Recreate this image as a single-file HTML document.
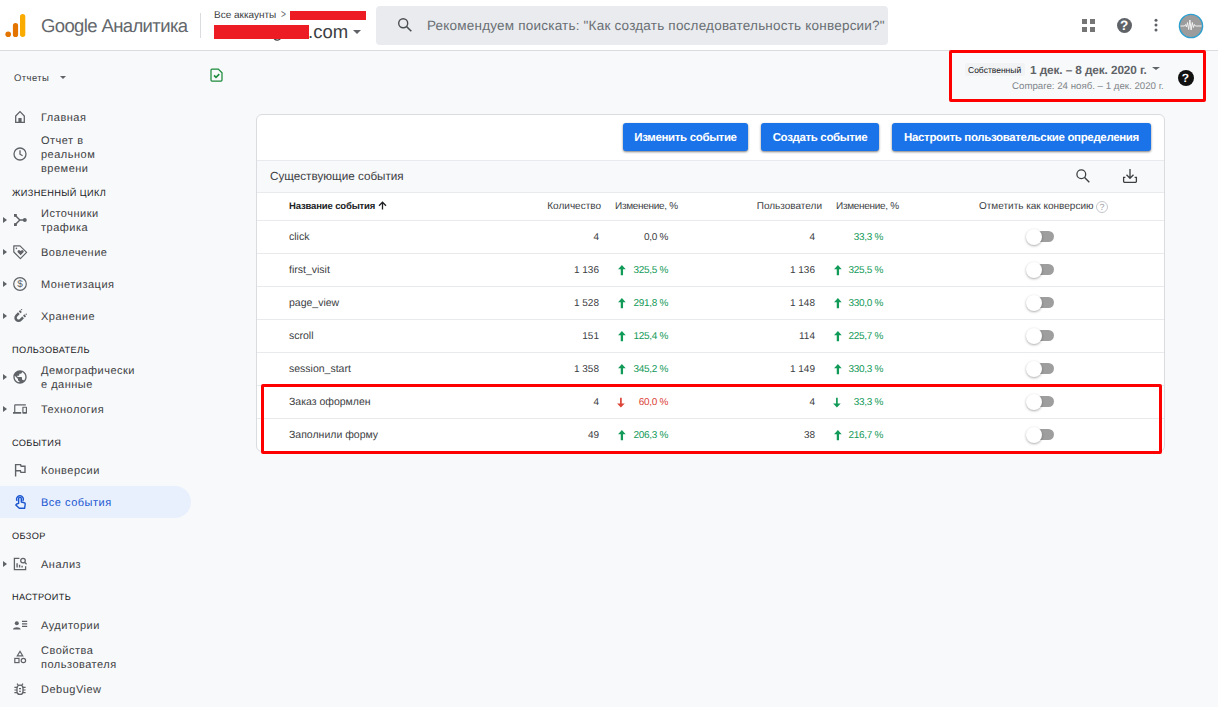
<!DOCTYPE html>
<html lang="ru">
<head>
<meta charset="utf-8">
<title>Google Аналитика</title>
<style>
*{box-sizing:border-box;margin:0;padding:0}
html,body{width:1218px;height:707px;overflow:hidden}
body{background:#f8f9fa;text-rendering:geometricPrecision;font-family:"Liberation Sans",sans-serif;color:#3c4043;position:relative}
.abs{position:absolute}
#hdr{position:absolute;left:0;top:0;width:1218px;height:51px;background:#fff;border-bottom:1px solid #dadce0}
#logo{position:absolute;left:5px;top:14px}
#brand{position:absolute;left:41px;top:15px;font-size:18.5px;color:#63676c;white-space:nowrap;letter-spacing:-0.62px}
#vsep{position:absolute;left:200px;top:13px;width:1px;height:25px;background:#dadce0}
#acc1{position:absolute;left:214px;top:9px;font-size:10px;color:#3c4043;white-space:nowrap}
#acc2{position:absolute;left:308px;top:21px;font-size:18.5px;color:#3c4043;white-space:nowrap}
.red{position:absolute;background:#ed1c24}
#search{z-index:0;position:absolute;left:376px;top:6px;width:512px;height:39px;background:#e9ebee;border-radius:4px}
#search span{position:absolute;left:51px;top:12px;font-size:13.5px;letter-spacing:.21px;color:#6a6f74;white-space:nowrap}
#side{position:absolute;left:0;top:51px;width:200px;height:656px}
.nav{position:absolute;left:41px;margin-top:1px;font-size:11px;letter-spacing:.5px;line-height:14px;color:#3c4043;white-space:nowrap}
.sec{position:absolute;left:12px;margin-top:2px;font-size:9.2px;color:#202124;letter-spacing:.38px;white-space:nowrap}
.tri{position:absolute;left:3px;width:0;height:0;border-left:4px solid #5f6368;border-top:3px solid transparent;border-bottom:3px solid transparent}
.ico{position:absolute;left:12px}
#active{position:absolute;left:0;top:486px;width:191px;height:32px;background:#e8f0fe;border-radius:0 16px 16px 0}
#card{position:absolute;left:256px;top:114px;width:909px;height:338px;background:#fff;border:1px solid #dadce0;border-radius:6px}
.btn{position:absolute;top:123px;height:28px;background:#1a73e8;color:#fff;font-size:11.5px;font-weight:bold;border-radius:3px;text-align:center;line-height:30.6px;white-space:nowrap;box-shadow:0 1px 2px rgba(0,0,0,.35),0 1px 3px rgba(0,0,0,.2);letter-spacing:-0.35px}
.hl{position:absolute;left:257px;width:907px;height:1px;background:#e8eaed}
.t{position:absolute;margin-top:1.6px;font-size:10.5px;color:#3c4043;white-space:nowrap}
.r{text-align:right}
.g{color:#129a58}
.p{font-size:10px;letter-spacing:-.3px}
.n{font-size:10px}
.nm{margin-top:.6px}
.rd{color:#db4437}
.tog{position:absolute;left:1030px;width:25px;height:11px}
.tog i{position:absolute;left:3px;top:0;width:21px;height:11px;border-radius:6px;background:#9e9e9e}
.tog b{position:absolute;left:-4px;top:-2.3px;width:16px;height:16px;border-radius:8px;background:#fff;box-shadow:0 1px 2.5px rgba(0,0,0,.33)}
.rbox{position:absolute;border:3px solid #f00}
</style>
</head>
<body>
<div id="hdr">
  <svg id="logo" width="21" height="24" viewBox="0 0 21 24">
    <rect x="15" y="0" width="5.3" height="23" rx="2.65" fill="#f9ab00"/>
    <rect x="7.9" y="9" width="5.2" height="14" rx="2.6" fill="#e37400"/>
    <circle cx="3.2" cy="20.2" r="2.8" fill="#e37400"/>
  </svg>
  <div id="brand">Google Аналитика</div>
  <div id="vsep"></div>
  <div id="acc1">Все аккаунты<span style="display:inline-block;margin-left:5px;font-size:12px;line-height:10px;transform:scaleX(.7);transform-origin:left center;color:#5f6368">&gt;</span></div>
  <div id="acc2">.com</div>

  <div class="red" style="left:290px;top:11px;width:76px;height:9px"></div>
  <svg class="abs" style="left:272px;top:36px" width="11" height="7" viewBox="0 0 11 7"><path d="M2.2 1.5 c.3 3.6 6.4 3.6 6.6 -1" fill="none" stroke="#3c4043" stroke-width="1.4"/></svg>
  <div class="red" style="left:214px;top:25px;width:95px;height:14px"></div>
  <div class="abs" style="left:353px;top:30px;width:0;height:0;border-top:4px solid #5f6368;border-left:4px solid transparent;border-right:4px solid transparent"></div>
  <svg class="abs" style="left:397px;top:17px;z-index:2" width="16" height="16" viewBox="0 0 16 16"><circle cx="6.2" cy="6.2" r="4.5" fill="none" stroke="#4a4d51" stroke-width="1.4"/><path d="M9.5 9.5 L14.3 14.3" stroke="#4a4d51" stroke-width="1.6"/></svg>
  <svg class="abs" style="left:1082px;top:19px" width="13" height="13" viewBox="0 0 13 13" fill="#757575"><rect x="0" y="0" width="5" height="5"/><rect x="8" y="0" width="5" height="5"/><rect x="0" y="8" width="5" height="5"/><rect x="8" y="8" width="5" height="5"/></svg>
  <div class="abs" style="left:1116.5px;top:17.8px;width:15.4px;height:15.4px;border-radius:8px;background:#5f6368;color:#fff;font-size:13.5px;font-weight:bold;text-align:center;line-height:16px">?</div>
  <svg class="abs" style="left:1153.7px;top:18.4px" width="4" height="15" viewBox="0 0 4 15" fill="#5f6368"><circle cx="2" cy="2.3" r="1.5"/><circle cx="2" cy="7.1" r="1.5"/><circle cx="2" cy="11.9" r="1.5"/></svg>
  <svg class="abs" style="left:1178px;top:12.5px" width="26" height="26" viewBox="0 0 26 26"><circle cx="13" cy="13" r="11.6" fill="#9c9c9c" stroke="#2a9fd0" stroke-width="1.4"/><path d="M2.5 13 H6.5 l1 -1.5 l1 2.5 l1 -4.5 l1.2 7 l1.2 -9.5 l1.2 10 l1.2 -7.5 l1.1 5 l1 -3 l1 1.5 H23.5" fill="none" stroke="#f2f2f2" stroke-width="1"/></svg>
  <div id="search"><span>Рекомендуем поискать: "Как создать последовательность конверсии?"</span></div>
</div>
<div id="side"></div>

<div class="abs" style="left:14px;top:73px;font-size:9.5px;letter-spacing:.4px;color:#3c4043">Отчеты</div>
<div class="abs" style="left:60px;top:76px;width:0;height:0;border-top:3px solid #5f6368;border-left:3px solid transparent;border-right:3px solid transparent"></div>
<svg class="abs" style="left:210.1px;top:68.4px" width="13" height="14" viewBox="0 0 13 14"><path d="M2 1 H8.3 L12 4.7 V12 a1 1 0 0 1 -1 1 H2 a1 1 0 0 1 -1 -1 V2 a1 1 0 0 1 1 -1 Z" fill="none" stroke="#1c8a3c" stroke-width="1.25"/><path d="M4 7.4 L6 9.3 L9.3 6.2" fill="none" stroke="#1c8a3c" stroke-width="1.6"/></svg>
<div id="active"></div>
<div class="nav" style="top:110px">Главная</div>
<div class="nav" style="top:133px">Отчет в<br>реальном<br>времени</div>
<div class="sec" style="top:186px">ЖИЗНЕННЫЙ ЦИКЛ</div>
<div class="tri" style="top:217px"></div>
<div class="nav" style="top:206px">Источники<br>трафика</div>
<div class="tri" style="top:249px"></div>
<div class="nav" style="top:245px">Вовлечение</div>
<div class="tri" style="top:281px"></div>
<div class="nav" style="top:277px">Монетизация</div>
<div class="tri" style="top:313px"></div>
<div class="nav" style="top:309px">Хранение</div>
<div class="sec" style="top:343px">ПОЛЬЗОВАТЕЛЬ</div>
<div class="tri" style="top:374px"></div>
<div class="nav" style="top:363px">Демографически<br>е данные</div>
<div class="tri" style="top:406px"></div>
<div class="nav" style="top:402px">Технология</div>
<div class="sec" style="top:436px">СОБЫТИЯ</div>
<div class="nav" style="top:463px">Конверсии</div>
<div class="nav" style="top:495px;color:#1a56d0">Все события</div>
<div class="sec" style="top:529px">ОБЗОР</div>
<div class="tri" style="top:561px"></div>
<div class="nav" style="top:557px">Анализ</div>
<div class="sec" style="top:590px">НАСТРОИТЬ</div>
<div class="nav" style="top:618px">Аудитории</div>
<div class="nav" style="top:643px">Свойства<br>пользователя</div>
<div class="nav" style="top:682px">DebugView</div>
<svg class="abs" style="left:12px;top:109px" width="16" height="16" viewBox="0 0 16 16" fill="none" stroke="#5f6368" stroke-width="1.3"><path d="M3.7 7 L8 2.6 L12.3 7 V13.4 H3.7 Z"/><rect x="6.4" y="9" width="3.2" height="4.4" fill="#5f6368" stroke="none"/></svg>
<svg class="abs" style="left:12px;top:146px" width="16" height="16" viewBox="0 0 16 16" fill="none" stroke="#5f6368" stroke-width="1.3"><circle cx="8" cy="8" r="6"/><path d="M8 4.3 V8.2 L10.6 9.8"/></svg>
<svg class="abs" style="left:12px;top:212px" width="16" height="16" viewBox="0 0 16 16" fill="none" stroke="#5f6368" stroke-width="1.3"><rect x="2" y="2" width="2.8" height="2.8" fill="#5f6368" stroke="none"/><rect x="2" y="11.2" width="2.8" height="2.8" fill="#5f6368" stroke="none"/><circle cx="12.8" cy="8" r="2" fill="#5f6368" stroke="none"/><path d="M3.4 3.4 L7.8 8 L3.4 12.6 M7.8 8 H13" stroke-width="1.5"/></svg>
<svg class="abs" style="left:12px;top:244px" width="16" height="16" viewBox="0 0 16 16" fill="none" stroke="#5f6368" stroke-width="1.2"><path d="M1.8 1.8 H8 L14.6 8.4 L8.4 14.6 L1.8 8 Z" stroke-linejoin="round"/><path d="M8.6 11.2 L5.9 8.5 a1.45 1.45 0 0 1 2.05 -2.05 l.65 .65 l.65 -.65 a1.45 1.45 0 0 1 2.05 2.05 z" fill="#5f6368" stroke="none" transform="rotate(0)"/><circle cx="4.4" cy="4.4" r="0.8" fill="#5f6368" stroke="none"/></svg>
<svg class="abs" style="left:12px;top:276px" width="16" height="16" viewBox="0 0 16 16" fill="none" stroke="#5f6368" stroke-width="1.2"><circle cx="8" cy="8" r="6.3"/><text x="8" y="11.4" font-family="Liberation Sans,sans-serif" font-size="10" fill="#5f6368" stroke="none" text-anchor="middle">$</text></svg>
<svg class="abs" style="left:12px;top:308px" width="16" height="16" viewBox="0 0 16 16" fill="none" stroke="#5f6368" stroke-width="1.3"><g transform="translate(7.4 8.8) rotate(45)"><path d="M-3 -2.2 V1.2 a3 3 0 0 0 6 0 V-2.2" stroke-width="2.5"/><path d="M-3 -5.2 V-3.4 M3 -5.2 V-3.4" stroke-width="2.5"/></g><circle cx="14.2" cy="6.2" r=".7" fill="#5f6368" stroke="none"/><circle cx="9.6" cy="1.6" r=".7" fill="#5f6368" stroke="none"/></svg>
<svg class="abs" style="left:11.7px;top:368.7px" width="16" height="16" viewBox="0 0 24 24" fill="#5f6368"><path d="M12 2C6.48 2 2 6.48 2 12s4.48 10 10 10 10-4.48 10-10S17.52 2 12 2zm-1 17.93c-3.95-.49-7-3.85-7-7.93 0-.62.08-1.21.21-1.79L9 15v1c0 1.1.9 2 2 2v1.93zm6.9-2.54c-.26-.81-1-1.39-1.9-1.39h-1v-3c0-.55-.45-1-1-1H8v-2h2c.55 0 1-.45 1-1V7h2c1.1 0 2-.9 2-2v-.41c2.93 1.19 5 4.06 5 7.41 0 2.08-.8 3.97-2.1 5.39z"/></svg>
<svg class="abs" style="left:12.6px;top:402px" width="14" height="14" viewBox="0 0 24 24" fill="#5f6368"><path d="M4 6h18V4H4c-1.100 0-2 .9-2 2v11H0v3h14v-3H4V6zm19 2h-6c-.55 0-1 .45-1 1v10c0 .55.45 1 1 1h6c.55 0 1-.45 1-1V9c0-.55-.45-1-1-1zm-1 9h-4v-7h4v7z"/></svg>
<svg class="abs" style="left:12px;top:462px" width="16" height="16" viewBox="0 0 16 16" fill="none" stroke="#5f6368" stroke-width="1.4"><path d="M3.6 14.6 V2.6 H8.6 L9.1 4.2 H13 V10.4 H8.9 L8.4 8.8 H3.6"/></svg>
<svg class="abs" style="left:12px;top:494px" width="16" height="16" viewBox="0 0 16 16" fill="none" stroke="#1a56d0" stroke-width="1.4"><path d="M6.6 9.4 V4.6 a1.35 1.35 0 0 1 2.7 0 V8 l3 .8 a1.2 1.2 0 0 1 .9 1.4 L12.6 14.3 H7.3 L3.8 10.9 l.9 -.9 z" stroke-linejoin="round"/><path d="M5.2 6.9 a3.3 3.3 0 1 1 5.5 0"/></svg>
<svg class="abs" style="left:12px;top:556px" width="16" height="16" viewBox="0 0 16 16" fill="none" stroke="#5f6368" stroke-width="1.3"><path d="M13.6 10.2 V13.6 H2.4 V2.4 H7.4"/><path d="M5.1 11.6 V7.2 M7.6 11.6 V8.8 M10.1 11.6 V9.8" stroke-width="1.4"/><circle cx="11" cy="4.6" r="2.3"/><path d="M12.7 6.3 L14.6 8.2"/></svg>
<svg class="abs" style="left:12px;top:617px" width="16" height="16" viewBox="0 0 16 16" fill="none" stroke="#5f6368" stroke-width="1.3"><circle cx="4.8" cy="6.2" r="2" fill="#5f6368" stroke="none"/><path d="M1 12.6 c0 -3.2 7.6 -3.2 7.6 0 z" fill="#5f6368" stroke="none"/><path d="M10 4.4 H15.2 M10 6.9 H15.2 M10 9.4 H15.2" stroke-width="1.2"/></svg>
<svg class="abs" style="left:12px;top:649px" width="16" height="16" viewBox="0 0 16 16" fill="none" stroke="#5f6368" stroke-width="1.3"><path d="M8 2.4 L10.7 6.8 H5.3 Z" stroke-width="1.2"/><rect x="2.8" y="9.4" width="4.2" height="4.2" stroke-width="1.2"/><circle cx="11.4" cy="11.5" r="2.2" stroke-width="1.2"/></svg>
<svg class="abs" style="left:12px;top:681px" width="16" height="16" viewBox="0 0 16 16" fill="none" stroke="#5f6368" stroke-width="1.3"><rect x="5" y="4.2" width="6" height="9.2" rx="3" stroke-width="1.3"/><path d="M2.4 6.3 H5 M2.4 9 H5 M2.4 11.7 H5 M11 6.3 H13.6 M11 9 H13.6 M11 11.7 H13.6 M6.2 4 L5 2.6 M9.8 4 L11 2.6" stroke-width="1.2"/><path d="M7 7.6 h2 M7 10.2 h2" stroke-width="1.1"/></svg>

<div id="card"></div>
<div class="abs" style="left:257px;top:161px;width:907px;height:31px;background:#f8f9fa"></div>
<div class="btn" style="left:623px;width:125px">Изменить событие</div>
<div class="btn" style="left:761px;width:118px">Создать событие</div>
<div class="btn" style="left:892px;width:259px">Настроить пользовательские определения</div>
<div class="hl" style="top:160px"></div>
<div class="hl" style="top:192px"></div>
<div class="hl" style="top:220px"></div>
<div class="hl" style="top:253px"></div>
<div class="hl" style="top:286px"></div>
<div class="hl" style="top:319px"></div>
<div class="hl" style="top:352px"></div>
<div class="hl" style="top:385px"></div>
<div class="hl" style="top:418px"></div>
<div class="abs" style="left:270px;top:170px;font-size:11.7px;color:#3c4043;white-space:nowrap">Существующие события</div>
<svg class="abs" style="left:1075px;top:168px" width="16" height="16" viewBox="0 0 16 16"><circle cx="6.3" cy="6.3" r="4.4" fill="none" stroke="#3c4043" stroke-width="1.3"/><path d="M9.6 9.6 L14.3 14.3" stroke="#3c4043" stroke-width="1.4"/></svg>
<svg class="abs" style="left:1122px;top:168px" width="16" height="16" viewBox="0 0 16 16" fill="none" stroke="#3c4043" stroke-width="1.3"><path d="M8 1 V10 M4.5 6.8 L8 10.3 L11.5 6.8"/><path d="M1 9.3 H3.4 M12.6 9.3 H15 M1.6 9.3 V13.2 a1.2 1.2 0 0 0 1.2 1.2 H13.2 a1.2 1.2 0 0 0 1.2 -1.2 V9.3"/></svg>
<div class="t" style="left:289px;top:199px;font-size:9.5px;font-weight:bold;color:#202124;letter-spacing:-.15px">Название события</div>
<svg class="abs" style="left:378px;top:201px" width="9" height="9" viewBox="0 0 9 9" fill="none" stroke="#202124" stroke-width="1.3"><path d="M4.5 8.5 V1.5 M1 4.8 L4.5 1.2 L8 4.8"/></svg>
<div class="t r" style="left:501px;width:100px;top:200px;margin-top:.6px;font-size:10px">Количество</div>
<div class="t" style="left:615px;top:200px;margin-top:.6px;font-size:10px;letter-spacing:-.3px">Изменение, %</div>
<div class="t r" style="left:722px;width:100px;top:200px;margin-top:.6px;font-size:10px">Пользователи</div>
<div class="t" style="left:836px;top:200px;margin-top:.6px;font-size:10px;letter-spacing:-.3px">Изменение, %</div>
<div class="t" style="left:979px;top:200px;margin-top:.6px;font-size:10px">Отметить как конверсию</div>
<div class="abs" style="left:1096px;top:200.5px;width:12px;height:12px;border-radius:6px;border:1px solid #c4c7cb;color:#9aa0a6;font-size:9px;line-height:10px;text-align:center">?</div>
<div class="t nm" style="left:289px;top:230px">click</div>
<div class="t r n" style="left:499px;width:100px;top:230px">4</div>
<div class="t r p" style="left:568px;width:100px;top:230px">0,0 %</div>
<div class="t r n" style="left:715px;width:100px;top:230px">4</div>
<div class="t r p g" style="left:783px;width:100px;top:230px">33,3 %</div>
<div class="tog" style="top:231px"><i></i><b></b></div>
<div class="t nm" style="left:289px;top:263px">first_visit</div>
<div class="t r n" style="left:499px;width:100px;top:263px">1 136</div>
<svg class="abs" style="left:617.8px;top:263px" width="8" height="13" viewBox="0 0 8 13" fill="#129a58"><path d="M0.1 6.3 L3.9 2 L7.7 6.3 H5.05 V12.2 H2.75 V6.3 Z"/></svg>
<div class="t r p g" style="left:568px;width:100px;top:263px">325,5 %</div>
<div class="t r n" style="left:715px;width:100px;top:263px">1 136</div>
<svg class="abs" style="left:833.5px;top:263px" width="8" height="13" viewBox="0 0 8 13" fill="#129a58"><path d="M0.1 6.3 L3.9 2 L7.7 6.3 H5.05 V12.2 H2.75 V6.3 Z"/></svg>
<div class="t r p g" style="left:783px;width:100px;top:263px">325,5 %</div>
<div class="tog" style="top:264px"><i></i><b></b></div>
<div class="t nm" style="left:289px;top:296px">page_view</div>
<div class="t r n" style="left:499px;width:100px;top:296px">1 528</div>
<svg class="abs" style="left:617.8px;top:296px" width="8" height="13" viewBox="0 0 8 13" fill="#129a58"><path d="M0.1 6.3 L3.9 2 L7.7 6.3 H5.05 V12.2 H2.75 V6.3 Z"/></svg>
<div class="t r p g" style="left:568px;width:100px;top:296px">291,8 %</div>
<div class="t r n" style="left:715px;width:100px;top:296px">1 148</div>
<svg class="abs" style="left:833.5px;top:296px" width="8" height="13" viewBox="0 0 8 13" fill="#129a58"><path d="M0.1 6.3 L3.9 2 L7.7 6.3 H5.05 V12.2 H2.75 V6.3 Z"/></svg>
<div class="t r p g" style="left:783px;width:100px;top:296px">330,0 %</div>
<div class="tog" style="top:297px"><i></i><b></b></div>
<div class="t nm" style="left:289px;top:329px">scroll</div>
<div class="t r n" style="left:499px;width:100px;top:329px">151</div>
<svg class="abs" style="left:617.8px;top:329px" width="8" height="13" viewBox="0 0 8 13" fill="#129a58"><path d="M0.1 6.3 L3.9 2 L7.7 6.3 H5.05 V12.2 H2.75 V6.3 Z"/></svg>
<div class="t r p g" style="left:568px;width:100px;top:329px">125,4 %</div>
<div class="t r n" style="left:715px;width:100px;top:329px">114</div>
<svg class="abs" style="left:833.5px;top:329px" width="8" height="13" viewBox="0 0 8 13" fill="#129a58"><path d="M0.1 6.3 L3.9 2 L7.7 6.3 H5.05 V12.2 H2.75 V6.3 Z"/></svg>
<div class="t r p g" style="left:783px;width:100px;top:329px">225,7 %</div>
<div class="tog" style="top:330px"><i></i><b></b></div>
<div class="t nm" style="left:289px;top:362px">session_start</div>
<div class="t r n" style="left:499px;width:100px;top:362px">1 358</div>
<svg class="abs" style="left:617.8px;top:362px" width="8" height="13" viewBox="0 0 8 13" fill="#129a58"><path d="M0.1 6.3 L3.9 2 L7.7 6.3 H5.05 V12.2 H2.75 V6.3 Z"/></svg>
<div class="t r p g" style="left:568px;width:100px;top:362px">345,2 %</div>
<div class="t r n" style="left:715px;width:100px;top:362px">1 149</div>
<svg class="abs" style="left:833.5px;top:362px" width="8" height="13" viewBox="0 0 8 13" fill="#129a58"><path d="M0.1 6.3 L3.9 2 L7.7 6.3 H5.05 V12.2 H2.75 V6.3 Z"/></svg>
<div class="t r p g" style="left:783px;width:100px;top:362px">330,3 %</div>
<div class="tog" style="top:363px"><i></i><b></b></div>
<div class="t nm" style="left:289px;top:395px">Заказ оформлен</div>
<div class="t r n" style="left:499px;width:100px;top:395px">4</div>
<svg class="abs" style="left:617.1px;top:396px" width="8" height="13" viewBox="0 0 8 13" fill="#db4437"><path d="M3.05 1.8 H4.75 V7.6 H7.7 L3.9 11.6 L0.1 7.6 H3.05 Z"/></svg>
<div class="t r p rd" style="left:568px;width:100px;top:395px">60,0 %</div>
<div class="t r n" style="left:715px;width:100px;top:395px">4</div>
<svg class="abs" style="left:832.8px;top:396px" width="8" height="13" viewBox="0 0 8 13" fill="#129a58"><path d="M3.05 1.8 H4.75 V7.6 H7.7 L3.9 11.6 L0.1 7.6 H3.05 Z"/></svg>
<div class="t r p g" style="left:783px;width:100px;top:395px">33,3 %</div>
<div class="tog" style="top:396px"><i></i><b></b></div>
<div class="t nm" style="left:289px;top:428px">Заполнили форму</div>
<div class="t r n" style="left:499px;width:100px;top:428px">49</div>
<svg class="abs" style="left:617.8px;top:428px" width="8" height="13" viewBox="0 0 8 13" fill="#129a58"><path d="M0.1 6.3 L3.9 2 L7.7 6.3 H5.05 V12.2 H2.75 V6.3 Z"/></svg>
<div class="t r p g" style="left:568px;width:100px;top:428px">206,3 %</div>
<div class="t r n" style="left:715px;width:100px;top:428px">38</div>
<svg class="abs" style="left:833.5px;top:428px" width="8" height="13" viewBox="0 0 8 13" fill="#129a58"><path d="M0.1 6.3 L3.9 2 L7.7 6.3 H5.05 V12.2 H2.75 V6.3 Z"/></svg>
<div class="t r p g" style="left:783px;width:100px;top:428px">216,7 %</div>
<div class="tog" style="top:429px"><i></i><b></b></div>
<div class="abs" style="left:965px;top:63px;width:60px;height:13px;background:#f1f3f4;border-radius:2px"></div>
<div class="abs" style="left:968px;top:65px;font-size:8.5px;color:#202124;white-space:nowrap">Собственный</div>
<div class="abs" style="left:1030px;top:63px;font-size:11.8px;font-weight:bold;color:#5f6368;white-space:nowrap;letter-spacing:-.1px">1 дек. – 8 дек. 2020 г.</div>
<div class="abs" style="left:1152px;top:67px;width:0;height:0;border-top:3px solid #5f6368;border-left:4px solid transparent;border-right:4px solid transparent"></div>
<div class="abs" style="left:1012px;top:81.2px;font-size:9.7px;color:#80868b;white-space:nowrap">Compare: 24 нояб. – 1 дек. 2020 г.</div>
<div class="abs" style="left:1177.5px;top:69.5px;width:16px;height:16px;border-radius:8px;background:#111;color:#fff;font-size:12px;font-weight:bold;text-align:center;line-height:16px">?</div>
<div class="rbox" style="left:949px;top:50px;width:257px;height:52px;border-radius:2px"></div>
<div class="rbox" style="left:261px;top:384px;width:901px;height:70px;border-radius:2px"></div>

</body>
</html>
